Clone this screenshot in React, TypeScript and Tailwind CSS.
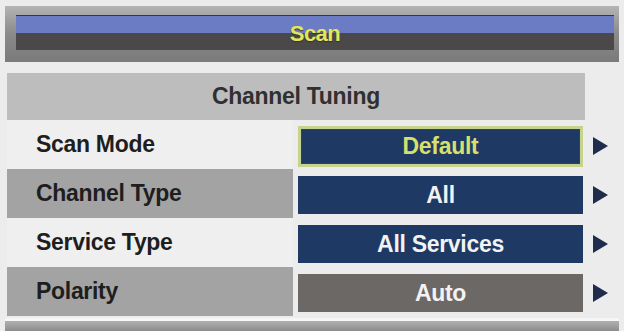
import React from 'react';

type Row = { label: string; value: string; tone: 'light' | 'dark'; box: 'navy' | 'gray'; selected?: boolean };

const rows: Row[] = [
  { label: 'Scan Mode', value: 'Default', tone: 'light', box: 'navy', selected: true },
  { label: 'Channel Type', value: 'All', tone: 'dark', box: 'navy' },
  { label: 'Service Type', value: 'All Services', tone: 'light', box: 'navy' },
  { label: 'Polarity', value: 'Auto', tone: 'dark', box: 'gray' },
];

const Arrow = () => (
  <svg width="15" height="18" viewBox="0 0 15 18" className="ml-[10px]">
    <polygon points="0,0 15,9 0,18" fill="#1f2c4c" />
  </svg>
);

export default function App() {
  return (
    <div
      className="w-[624px] h-[331px] bg-[#ececec] overflow-hidden flex flex-col"
      style={{ fontFamily: '"Liberation Sans", Arial, sans-serif' }}
    >
      {/* title bar */}
      <div className="mx-[5px] mt-[6px] h-[56px] pl-[11px] pr-[5px] pt-[9px] bg-gradient-to-b from-[#b4b4b4] via-[#8a8a8a] to-[#7a7a7a]">
        <div className="h-[35px] flex items-center justify-center border-t border-[#2c3660] bg-gradient-to-b from-[#6b7cc4] from-50% to-[#4a4848] to-50%">
          <span className="text-[22px] font-bold tracking-[-0.5px] text-[#e4e65a] [text-shadow:0_1px_1px_#333]">Scan</span>
        </div>
      </div>

      <div className="mt-[11px] flex flex-col">
        <div className="ml-[7px] w-[578px] h-[47px] bg-[#bdbdbd] flex items-center justify-center">
          <span className="text-[23px] font-bold tracking-[-0.3px] text-[#303030]">Channel Tuning</span>
        </div>

        {rows.map((r) => (
          <div key={r.label} className="h-[49px] flex">
            <div
              className={`ml-[7px] w-[286px] flex items-center pl-[29px] ${
                r.tone === 'light' ? 'bg-[#efefef]' : 'bg-[#a3a3a3]'
              }`}
            >
              <span className="text-[23px] font-bold tracking-[-0.3px] text-[#1e1e1e]">{r.label}</span>
            </div>
            <div className="flex items-center pl-[5px] pt-[3px]">
              <div
                className={`w-[285px] h-[38px] flex items-center justify-center ${
                  r.box === 'navy' ? 'bg-[#1d3964]' : 'bg-[#6b6865]'
                } ${r.selected ? 'h-[41px] border-[3px] border-[#c6d38c] ring-1 ring-inset ring-[#39452a]' : ''}`}
              >
                <span
                  className={`text-[23px] font-bold tracking-[-0.3px] ${
                    r.selected ? 'text-[#d7e06c]' : 'text-[#f2f2f2]'
                  }`}
                >
                  {r.value}
                </span>
              </div>
              <Arrow />
            </div>
          </div>
        ))}
      </div>

      {/* bottom bar */}
      <div className="mx-[5px] mt-[2px] h-[3px] bg-[#f6f6f6]" />
      <div className="mx-[5px] flex-1 bg-gradient-to-b from-[#b0b0b0] to-[#8c8c8c]" />
    </div>
  );
}
